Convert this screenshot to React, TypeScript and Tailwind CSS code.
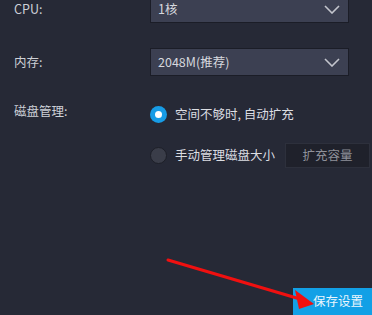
const font = { fontFamily: '"Noto Sans CJK SC", "Noto Sans", sans-serif' };

function Select({ value, className }: { value: string; className?: string }) {
  return (
    <div className={`flex h-[28px] w-[199px] items-center justify-between border border-[#1b1d27] bg-[#3c4052] pl-[7px] pr-[8px] ${className ?? ""}`}>
      <span className="text-[12.5px] leading-none text-[#d6d8de]">{value}</span>
      <svg width="16" height="9" viewBox="0 0 16 9" fill="none">
        <polyline points="1,1 8,8 15,1" stroke="#c3c5cd" strokeWidth="1.6" />
      </svg>
    </div>
  );
}

function Radio({ checked }: { checked?: boolean }) {
  return checked ? (
    <span className="flex h-[17px] w-[17px] items-center justify-center rounded-full bg-[#179ce6]">
      <span className="h-[7px] w-[7px] rounded-full bg-white" />
    </span>
  ) : (
    <span className="h-[17px] w-[17px] rounded-full border border-[#1d1f28] bg-[#3a3d49]" />
  );
}

export default function App() {
  return (
    <div style={font} className="relative flex h-[315px] w-[372px] flex-col overflow-hidden bg-[#262936] text-[12.5px] text-[#cdd0d6]">
      <div className="-mt-[5px] flex items-center">
        <span className="w-[150px] pl-[14px]">CPU:</span>
        <Select value="1核" />
      </div>

      <div className="mt-[25px] flex items-center">
        <span className="w-[150px] pl-[14px]">内存:</span>
        <Select value="2048M(推荐)" className="h-[27px]" />
      </div>

      <div className="mt-[27px] flex items-start">
        <span className="w-[150px] pl-[14px] leading-[16px]">磁盘管理:</span>
        <div className="flex flex-col pt-[3px]">
          <div className="flex h-[17px] items-center gap-[8px]">
            <Radio checked />
            <span className="leading-none text-[#dcdee3]">空间不够时, 自动扩充</span>
          </div>
          <div className="mt-[20px] flex h-[25px] items-center">
            <Radio />
            <span className="ml-[8px] leading-none text-[#dcdee3]">手动管理磁盘大小</span>
            <button className="ml-[10px] flex h-[25px] w-[85px] items-center justify-center border border-[#2d303c] bg-[#1f212b] text-[12.5px] text-[#8e9099]">
              扩充容量
            </button>
          </div>
        </div>
      </div>

      <div className="flex flex-1 items-end justify-end">
        <button className="flex h-[27px] w-[79px] items-center bg-[#12a0e6] pl-[20px] text-[12.5px] text-[#eaf6fd]">
          保存设置
        </button>
      </div>

      <svg className="pointer-events-none absolute left-0 top-0" width="372" height="315" viewBox="0 0 372 315">
        <line x1="168" y1="260" x2="300" y2="299" stroke="#f01010" strokeWidth="3" strokeLinecap="round" />
        <polygon points="314,304 295,290 299,309" fill="#f01010" />
      </svg>
    </div>
  );
}
